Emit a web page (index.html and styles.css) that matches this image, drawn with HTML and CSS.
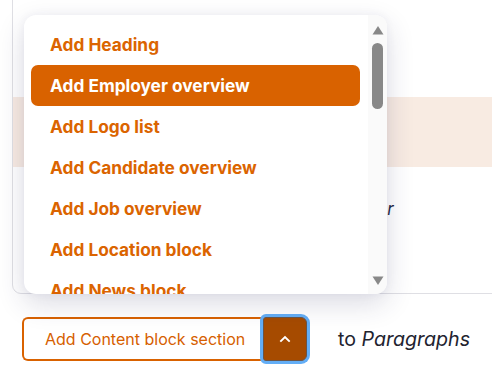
FILE: index.html
```html
<!DOCTYPE html>
<html>
<head>
<meta charset="utf-8">
<link rel="stylesheet" href="styles.css">
</head>
<body>
<div class="page">
  <div class="card">
    <div class="band"></div>
    <p class="note">Paragraph type for <em>Employer</em></p>
  </div>
  <div class="actions">
    <div class="split">
      <button class="add-btn">Add Content block section</button>
      <button class="toggle" aria-label="toggle">
        <svg width="12" height="8" viewBox="0 0 12 8"><path d="M1.3 6.7 L6 2 L10.7 6.7" fill="none" stroke="#fff" stroke-width="1.9"/></svg>
      </button>
    </div>
    <span class="to">to <em>Paragraphs</em></span>
  </div>
  <div class="menu">
    <ul class="list">
      <li>Add Heading</li>
      <li class="active">Add Employer overview</li>
      <li>Add Logo list</li>
      <li>Add Candidate overview</li>
      <li>Add Job overview</li>
      <li>Add Location block</li>
      <li>Add News block</li>
    </ul>
    <div class="track">
      <svg class="arrow" width="12" height="10" viewBox="0 0 12 10"><path d="M6 1 L11.5 9.5 L0.5 9.5 Z" fill="#888"/></svg>
      <div class="thumb"></div>
      <div class="spacer"></div>
      <svg class="arrow" width="12" height="10" viewBox="0 0 12 10"><path d="M0.5 0.5 L11.5 0.5 L6 9 Z" fill="#888"/></svg>
    </div>
  </div>
</div>
</body>
</html>
```
FILE: styles.css
```css
* { box-sizing: border-box; }
html, body { margin: 0; padding: 0; background: #fff; }
body {
  font-family: Inter, "Noto Sans", sans-serif;
  width: 492px;
  height: 378px;
  overflow: hidden;
}
.page {
  position: relative;
  display: flow-root;
  height: 378px;
}
.card {
  margin-left: 12px;
  margin-top: -10px;
  width: 600px;
  height: 304px;
  border: 1px solid #dfdfe4;
  border-radius: 9px;
  background: #fff;
  padding-top: 106px;
}
.band {
  height: 70px;
  background: #f8ebe2;
}
.note {
  margin: 32px 0 0 150px;
  font-size: 17px;
  color: #1f2a44;
}
.actions {
  display: flex;
  align-items: center;
  margin: 23px 0 0 22px;
}
.split {
  display: flex;
}
.add-btn {
  height: 44px;
  width: 241px;
  border: 2px solid #d96200;
  border-right: none;
  border-radius: 6px 0 0 6px;
  background: #fff;
  color: #d66000;
  font-family: Inter, sans-serif;
  font-size: 16px;
  text-align: left;
  padding: 0 0 0 21px;
}
.toggle {
  width: 44px;
  height: 44px;
  margin: 0;
  padding: 0;
  background: #a64b00;
  border: 1px solid #6a5548;
  border-radius: 3px 6px 6px 3px;
  box-shadow: 0 0 0 3px #63aef6;
  display: flex;
  align-items: center;
  justify-content: center;
}
.to {
  margin-left: 31px;
  font-size: 19.6px;
  color: #22232f;
}
.menu {
  position: absolute;
  left: 24px;
  top: 15px;
  width: 363px;
  height: 279px;
  background: #fff;
  border-radius: 12px;
  box-shadow: 0 10px 28px rgba(40, 40, 90, 0.16), 0 0 10px rgba(40, 40, 90, 0.05);
  display: flex;
  overflow: hidden;
}
.list {
  list-style: none;
  margin: 0;
  padding: 9px 8px 0 7px;
  flex: 1;
}
.list li {
  height: 41px;
  line-height: 41px;
  padding-left: 19px;
  font-size: 17.3px;
  font-weight: 700;
  color: #db6400;
  border-radius: 7px;
  white-space: nowrap;
}
.list li.active {
  background: #d96200;
  color: #fff;
}
.track {
  width: 19px;
  background: #fafafa;
  display: flex;
  flex-direction: column;
  align-items: center;
  padding: 10px 0 8px;
}
.arrow { display: block; }
.thumb {
  margin-top: 8px;
  width: 11px;
  height: 66px;
  border-radius: 6px;
  background: #888;
}
.spacer { flex: 1; }
```
